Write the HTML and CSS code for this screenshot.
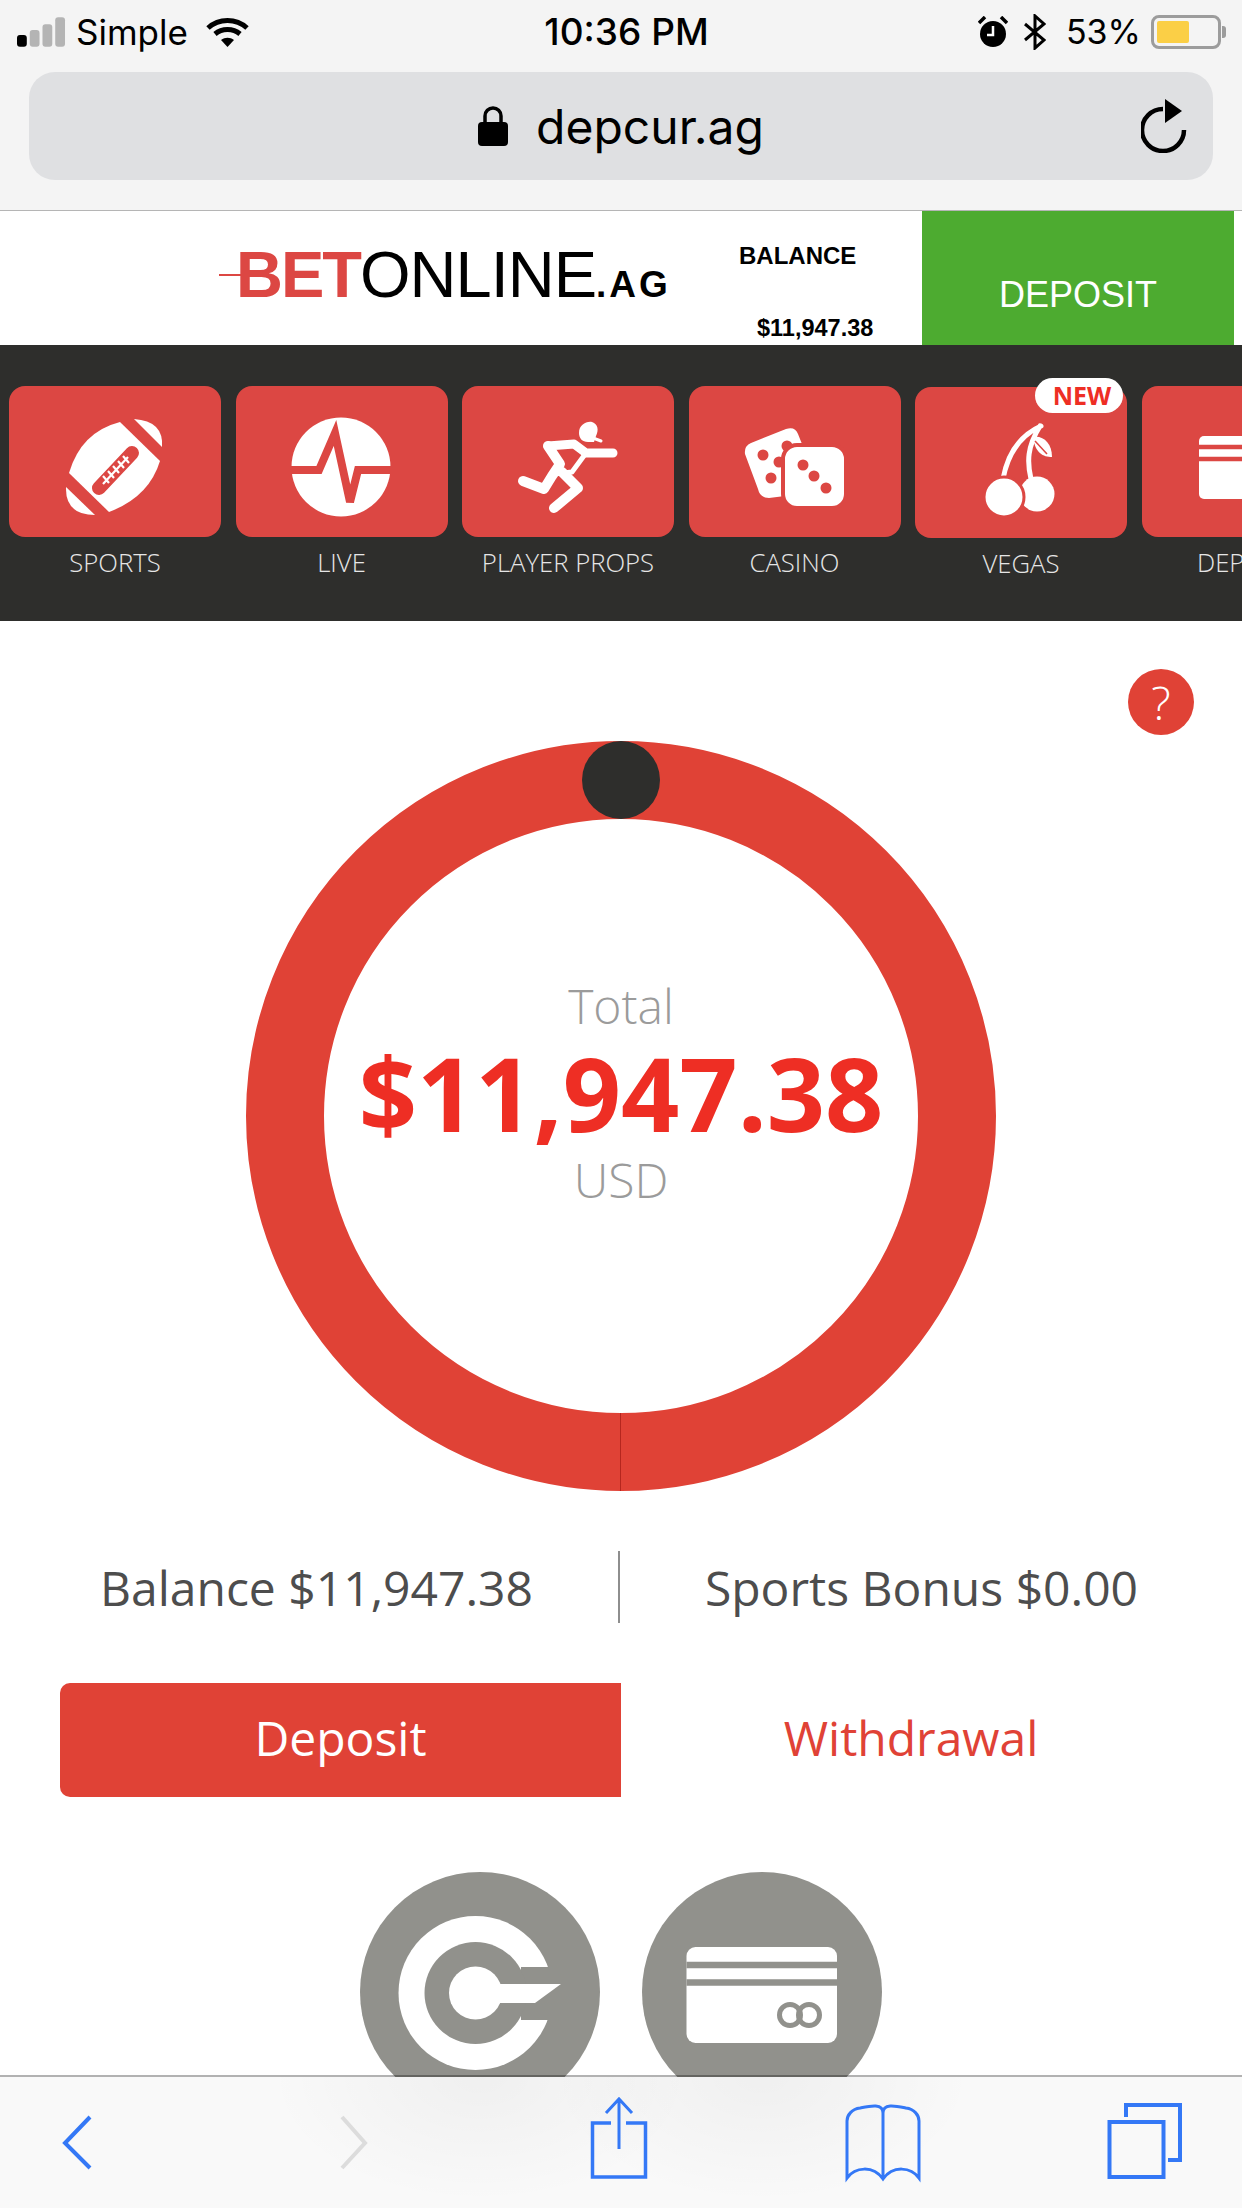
FILE: index.html
```html
<!DOCTYPE html>
<html lang="en">
<head>
  <meta charset="UTF-8" />
  <title>BetOnline</title>
  <link rel="stylesheet" href="styles.css">
</head>
<body>
  <div class="status">
    <div class="status-left">
      <svg class="signal" viewBox="0 0 50 30">
        <rect x="0" y="18" width="10" height="12" rx="3" fill="#000"/>
        <rect x="13" y="13" width="10" height="17" rx="3" fill="#b4b4b4"/>
        <rect x="26" y="7" width="10" height="23" rx="3" fill="#b4b4b4"/>
        <rect x="39" y="0" width="10" height="30" rx="3" fill="#b4b4b4"/>
      </svg>
      <span>Simple</span>
      <svg class="wifi" viewBox="0 0 43 30" fill="none" stroke="#000" stroke-width="5">
        <path d="M2 11 C13 1 30 1 41 11"/>
        <path d="M9 17 C16 11 27 11 34 17"/>
        <path d="M21.5 30 L15 23 C19 20 24 20 28 23 Z" fill="#000" stroke="none"/>
      </svg>
    </div>
    <div class="status-time">10:36 PM</div>
    <div class="status-right">
      <svg class="alarm" viewBox="0 0 30 32">
        <circle cx="15" cy="18" r="13" fill="#000"/>
        <path d="M15 10 V19 H9" fill="none" stroke="#fff" stroke-width="2.5"/>
        <path d="M1 7 L7 1 M29 7 L23 1" stroke="#000" stroke-width="3.5"/>
      </svg>
      <svg class="bt" viewBox="0 0 22 36" fill="none" stroke="#000" stroke-width="3">
        <path d="M1 10 L20 26 L11 34 V2 L20 10 L1 26"/>
      </svg>
      <span class="pct">53%</span>
      <div class="battery"><div class="battery-fill"></div></div>
    </div>
  </div>

  <div class="urlwrap">
    <div class="urlbar">
      <div></div>
      <div class="url">
        <svg class="lock" viewBox="0 0 30 40">
          <path d="M7 18 V10 A8 8 0 0 1 23 10 V18" fill="none" stroke="#000" stroke-width="3.5"/>
          <rect x="0" y="16" width="30" height="24" rx="4" fill="#000"/>
        </svg>
        <span>depcur.ag</span>
      </div>
      <svg class="reload" viewBox="0 0 46 54" fill="none">
        <path d="M22 10 A21 21 0 1 0 43 31" stroke="#000" stroke-width="4.5"/>
        <path d="M24 0 L41 12 L24 24 Z" fill="#000"/>
      </svg>
    </div>
  </div>

  <header class="topbar">
    <div class="logo"><span class="logo-bet">BET</span><span class="logo-online">ONLINE</span><span class="logo-ag">.AG</span></div>
    <div class="balance-box">
      <div class="balance-label">BALANCE</div>
      <div class="balance-amount">$11,947.38</div>
    </div>
    <div class="deposit-top">DEPOSIT</div>
  </header>

  <nav class="nav">
    <div class="nav-item">
      <div class="tile">
        <svg viewBox="0 0 212 151" fill="#fff">
          <path d="M111 36 L151 75 Q140 111 100 126 L60 87 Q72 46 111 36Z"/>
          <path d="M125 33 L153 61 Q155 35 125 33Z"/>
          <path d="M57 101 L86 129 Q56 129 57 101Z"/>
          <path d="M123 67 L90 102" stroke="#dc4743" stroke-width="14" stroke-linecap="round"/>
          <path d="M119 71 L94 98 M114 70 L120 77 M109 75 L115 82 M104 80 L110 87 M99 85 L105 92 M94 90 L100 97" stroke="#fff" stroke-width="2.2" fill="none"/>
        </svg>
      </div>
      <div class="nav-label">SPORTS</div>
    </div>
    <div class="nav-item">
      <div class="tile">
        <svg viewBox="0 0 212 151">
          <circle cx="105" cy="81" r="49.5" fill="#fff"/>
          <path d="M54 84 H83 L99 47 L114 116 L122 84 H157" fill="none" stroke="#dc4743" stroke-width="8"/>
        </svg>
      </div>
      <div class="nav-label">LIVE</div>
    </div>
    <div class="nav-item">
      <div class="tile">
        <svg viewBox="0 0 212 151" fill="none" stroke="#fff" stroke-linecap="round" stroke-linejoin="round">
          <path d="M117 47 C117 39 124 35 130 36 C136 38 137 44 134 50 L132 56 L126 56 C120 56 117 52 117 47Z" fill="#fff" stroke="none"/>
          <path d="M131 52 L139 55" stroke-width="3"/>
          <path d="M86 60 L112 58 L124 67 H151" stroke-width="9"/>
          <path d="M86 60 L98 78 L90 90 L82 103 L61 95" stroke-width="10"/>
          <path d="M124 67 L110 86 L92 88" stroke-width="5"/>
          <path d="M100 86 L116 102 L92 122" stroke-width="10"/>
        </svg>
      </div>
      <div class="nav-label">PLAYER PROPS</div>
    </div>
    <div class="nav-item">
      <div class="tile">
        <svg viewBox="0 0 212 151" fill="#fff">
          <path d="M62 57 L97 43 Q106 40 109 48 L113 58 L96 110 L80 112 Q71 112 69 103 L56 68 Q55 60 62 57Z"/>
          <circle cx="74" cy="69" r="5.5" fill="#dc4743"/>
          <circle cx="98" cy="60" r="5.5" fill="#dc4743"/>
          <circle cx="90" cy="76" r="5.5" fill="#dc4743"/>
          <circle cx="82" cy="92" r="5.5" fill="#dc4743"/>
          <rect x="94" y="59" width="63" height="63" rx="14" stroke="#dc4743" stroke-width="4"/>
          <circle cx="114" cy="79" r="5.5" fill="#dc4743"/>
          <circle cx="125" cy="90" r="5.5" fill="#dc4743"/>
          <circle cx="137" cy="102" r="5.5" fill="#dc4743"/>
        </svg>
      </div>
      <div class="nav-label">CASINO</div>
    </div>
    <div class="nav-item nav-vegas">
      <div class="tile">
        <svg viewBox="0 0 212 151" fill="#fff">
          <path d="M88 92 C92 70 102 50 126 39 M116 92 C112 75 112 60 125 39" fill="none" stroke="#fff" stroke-width="5" stroke-linecap="round"/>
          <path d="M118 50 C128 48 137 56 137 70 C128 70 120 66 118 50Z"/>
          <path d="M120 54 L132 67" stroke="#dc4743" stroke-width="1.5"/>
          <circle cx="122" cy="107" r="17.5"/>
          <circle cx="89" cy="110" r="20" stroke="#dc4743" stroke-width="3"/>
        </svg>
      </div>
      <div class="nav-label">VEGAS</div>
      <div class="badge">NEW</div>
    </div>
    <div class="nav-item">
      <div class="tile">
        <svg viewBox="0 0 212 151">
          <rect x="57" y="50" width="120" height="63" rx="5" fill="#fff"/>
          <path d="M57 61 H177 M57 73 H177" stroke="#dc4743" stroke-width="4.5"/>
        </svg>
      </div>
      <div class="nav-label">DEPOSIT</div>
    </div>
  </nav>

  <main class="main">
    <div class="help-row"><div class="help">?</div></div>

    <div class="ring">
      <div class="knob"></div>
      <div class="ring-seam"></div>
      <div class="ring-total">Total</div>
      <div class="ring-amount">$11,947.38</div>
      <div class="ring-usd">USD</div>
    </div>

    <div class="summary">
      <span>Balance $11,947.38</span>
      <div class="summary-line"></div>
      <span>Sports Bonus $0.00</span>
    </div>

    <div class="tabs">
      <div class="tab tab-active">Deposit</div>
      <div class="tab">Withdrawal</div>
    </div>

    <div class="methods">
      <svg class="method" viewBox="0 0 240 240">
        <circle cx="120" cy="120" r="120" fill="#91918c"/>
        <circle cx="115.5" cy="121" r="77" fill="#fff"/>
        <rect x="161" y="95" width="60" height="53" fill="#91918c"/>
        <circle cx="115.5" cy="121" r="51" fill="#91918c"/>
        <circle cx="115.5" cy="121" r="26.5" fill="#fff"/>
        <path d="M130 112 H201 L175 131 H130Z" fill="#fff"/>
      </svg>
      <svg class="method" viewBox="0 0 240 240">
        <circle cx="120" cy="120" r="120" fill="#91918c"/>
        <rect x="44.5" y="75" width="150.5" height="96" rx="9" fill="#fff"/>
        <path d="M44.5 93 H195 M44.5 110.500 H195" stroke="#91918c" stroke-width="6.500"/>
        <circle cx="148" cy="143" r="10.500" fill="none" stroke="#91918c" stroke-width="5"/>
        <circle cx="167" cy="143" r="10.500" fill="none" stroke="#91918c" stroke-width="5"/>
      </svg>
    </div>
  </main>

  <div class="toolbar">
    <svg class="toolbar-icons" viewBox="0 0 1242 133" fill="none" stroke="#3478f6" stroke-width="3.500">
      <path d="M90 42 L65 68 L90 93" stroke-width="4"/>
      <path d="M342 42 L365 68 L342 93" stroke="#dcdcdc" stroke-width="4"/>
      <path d="M611 48 H592.500 V102 H645.500 V48 H626"/>
      <path d="M619 24 V74 M606 38 L619 24 L632 38" stroke-width="3"/>
      <path d="M883 38 C883 28 870 31 860 33 C852 34 847 40 847 46 V103 C855 92 873 90 883 104 C893 90 911 92 919 103 V46 C919 40 914 34 906 33 C896 31 883 28 883 38 V104" stroke-width="3"/>
      <rect x="1109.500" y="47" width="54" height="55" stroke-width="4"/>
      <path d="M1126 42 V30 H1180 V85 H1168" stroke-width="4"/>
    </svg>
  </div>
</body>
</html>
```
FILE: styles.css
```css
* {
  box-sizing: border-box;
}

html, body {
  margin: 0;
  width: 1242px;
  height: 2208px;
  overflow: hidden;
}

body {
  position: relative;
  background: #fff;
  font-family: "Open Sans", sans-serif;
}

/* phone chrome */
.status {
  height: 72px;
  background: #f4f4f4;
  display: grid;
  grid-template-columns: 1fr auto 1fr;
  align-items: center;
  padding: 0 16px 9px 17px;
  font-family: Inter, sans-serif;
  font-size: 35px;
  color: #000;
}

.status-left, .status-right {
  display: flex;
  align-items: center;
}

.status-right {
  justify-content: flex-end;
}

.signal {
  width: 49px;
  height: 30px;
  margin-right: 10px;
}

.wifi {
  width: 43px;
  height: 30px;
  margin-left: 18px;
}

.status-time {
  font-size: 37px;
  font-weight: 500;
  margin-left: 10px;
}

.alarm {
  width: 30px;
  height: 32px;
  margin-right: 16px;
}

.bt {
  width: 22px;
  height: 36px;
  margin-right: 20px;
}

.pct {
  font-size: 34px;
  margin-right: 10px;
}

.battery {
  width: 70px;
  height: 34px;
  margin-right: 5px;
  border: 3px solid #9c9c9c;
  border-radius: 8px;
  padding: 3px;
  position: relative;
}

.battery::after {
  content: "";
  position: absolute;
  right: -8px;
  top: 8px;
  width: 4px;
  height: 12px;
  background: #9c9c9c;
  border-radius: 0 3px 3px 0;
}

.battery-fill {
  width: 32px;
  height: 100%;
  background: #fbcf46;
  border-radius: 2px;
}

.urlwrap {
  height: 138px;
  background: #f4f4f4;
  padding: 0 29px 30px;
}

.urlbar {
  height: 108px;
  background: #dfe0e2;
  border-radius: 26px;
  display: grid;
  grid-template-columns: 1fr auto 1fr;
  align-items: center;
}

.url {
  display: flex;
  align-items: center;
  gap: 28px;
  font-family: Inter, sans-serif;
  font-size: 48px;
  color: #000;
}

.lock {
  width: 30px;
  height: 40px;
}

.reload {
  width: 46px;
  height: 54px;
  justify-self: end;
  margin-right: 26px;
}

/* site header */
.topbar {
  height: 135px;
  border-top: 1px solid #b5b5b5;
  display: flex;
  font-family: "Liberation Sans", sans-serif;
  color: #000;
}

.logo {
  flex: 0 0 739px;
  padding: 26px 0 0 236px;
  white-space: nowrap;
  font-size: 65px;
  line-height: 75px;
}

.logo-bet {
  color: #dc4743;
  font-weight: 700;
  letter-spacing: -2px;
  position: relative;
}

.logo-bet::before {
  content: "";
  position: absolute;
  left: -17px;
  top: 36px;
  width: 26px;
  height: 2px;
  background: #dc4743;
}

.logo-online {
  letter-spacing: -1px;
}

.logo-ag {
  font-size: 37px;
  font-weight: 700;
  letter-spacing: 3px;
}

.balance-box {
  flex: 0 0 183px;
  font-weight: 700;
}

.balance-label {
  font-size: 24px;
  line-height: 28px;
  margin-top: 31px;
}

.balance-amount {
  font-size: 23.5px;
  line-height: 28px;
  margin: 44px 0 0 18px;
}

.deposit-top {
  flex: 0 0 312px;
  background: #4dab30;
  color: #fff;
  font-size: 36px;
  text-align: center;
  padding-top: 63px;
}

/* tiles */
.nav {
  height: 276px;
  background: #2e2e2c;
  display: flex;
  gap: 14.5px;
  padding: 41px 0 0 9px;
  overflow: hidden;
}

.nav-item {
  flex: 0 0 212px;
  position: relative;
}

.nav-vegas {
  margin-top: 1px;
}

.tile {
  height: 151px;
  background: #dc4743;
  border-radius: 16px;
}

.tile svg {
  display: block;
  width: 100%;
  height: 100%;
}

.nav-label {
  margin-top: 11px;
  text-align: center;
  white-space: nowrap;
  font-size: 25.7px;
  line-height: 30px;
  font-weight: 300;
  color: #e6e6e6;
}

.badge {
  position: absolute;
  top: -9px;
  right: 4px;
  width: 88px;
  height: 35px;
  border-radius: 18px;
  background: #fff;
  color: #ee2e24;
  font-size: 25px;
  font-weight: 700;
  line-height: 35px;
  text-align: center;
  padding-left: 6px;
}

/* wallet */
.main {
  padding-top: 48px;
}

.help-row {
  display: flex;
  justify-content: flex-end;
  padding-right: 48px;
}

.help {
  width: 66px;
  height: 66px;
  border-radius: 50%;
  background: #e04236;
  color: #fff;
  font-size: 46px;
  font-weight: 300;
  line-height: 66px;
  text-align: center;
}

.ring {
  width: 750px;
  height: 750px;
  margin: 6px auto 0;
  border: 78px solid #e04236;
  border-radius: 50%;
  position: relative;
  display: flex;
  flex-direction: column;
  align-items: center;
  justify-content: center;
  padding-bottom: 46px;
}

.knob {
  position: absolute;
  top: -78px;
  left: 258px;
  width: 78px;
  height: 78px;
  border-radius: 50%;
  background: #2e2e2c;
}

.ring-seam {
  position: absolute;
  bottom: -78px;
  left: 296px;
  width: 1px;
  height: 78px;
  background: #b5261e;
}

.ring-total, .ring-usd {
  font-size: 48px;
  font-weight: 300;
  line-height: 60px;
  color: #9b9b9b;
}

.ring-amount {
  font-size: 102px;
  font-weight: 700;
  line-height: 114px;
  color: #ee2e24;
}

.summary {
  margin-top: 60px;
  height: 72px;
  display: flex;
  justify-content: center;
  align-items: center;
  gap: 85px;
  padding-right: 4px;
  font-size: 48px;
  color: #4d4d4d;
}

.summary-line {
  width: 2px;
  height: 72px;
  background: #8e8e8e;
}

.tabs {
  margin: 60px 41px 0 60px;
  display: flex;
  height: 114px;
}

.tab {
  flex: 1;
  display: flex;
  align-items: center;
  justify-content: center;
  font-size: 48px;
  color: #e04236;
  padding-bottom: 5px;
}

.tab-active {
  flex: 0 0 561px;
  background: #e04236;
  color: #fff;
  border-radius: 10px 0 0 10px;
}

.methods {
  margin-top: 75px;
  padding-left: 360px;
  display: flex;
  gap: 42px;
}

.method {
  width: 240px;
  height: 240px;
}

/* safari bottom bar, sits on top of the page */
.toolbar {
  position: absolute;
  left: 0;
  right: 0;
  bottom: 0;
  height: 133px;
  background-color: #f9f9f9;
  background-image:
    radial-gradient(ellipse 210px 125px at 480px 0, rgba(0, 0, 0, 0.04), transparent),
    radial-gradient(ellipse 210px 125px at 762px 0, rgba(0, 0, 0, 0.04), transparent);
  background-clip: padding-box;
  border-top: 2px solid rgba(0, 0, 0, 0.3);
}

.toolbar-icons {
  display: block;
  width: 1242px;
  height: 133px;
  margin-top: -2px;
}
```
